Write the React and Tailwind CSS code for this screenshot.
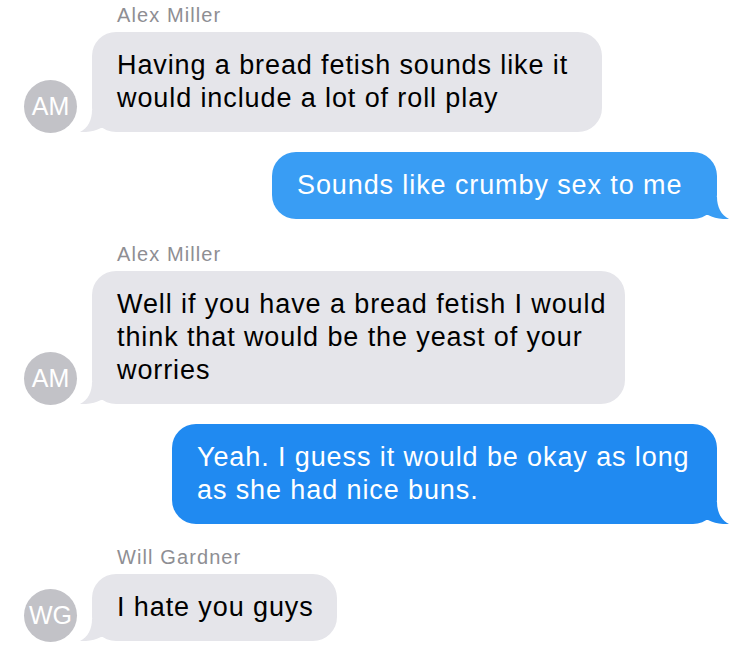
import React from "react";

const FONT = { fontFamily: '"Liberation Sans", Arial, sans-serif' };

function TailLeft({ color }) {
  return (
    <svg
      className="absolute bottom-0 left-[-12px] h-[22px] w-[40px]"
      viewBox="0 0 40 22"
    >
      <path
        d="M12 0 C12 10 8 18 0 22 C8 22.5 15 21 21 18 L34 18 L34 0 Z"
        fill={color}
      />
    </svg>
  );
}

function TailRight({ color }) {
  return (
    <svg
      className="absolute bottom-0 right-[-12px] h-[22px] w-[40px]"
      viewBox="0 0 40 22"
    >
      <path
        d="M28 0 C28 10 32 18 40 22 C32 22.5 25 21 19 18 L6 18 L6 0 Z"
        fill={color}
      />
    </svg>
  );
}

function Name({ children, className = "" }) {
  return (
    <div
      className={`ml-[117px] h-[24px] mb-[5px] text-[20px] leading-[24px] tracking-[1.1px] text-[#8e8e93] ${className}`}
    >
      {children}
    </div>
  );
}

function Avatar({ initials }) {
  return (
    <div className="ml-[24px] mb-[-1px] flex h-[53px] w-[53px] shrink-0 items-center justify-center rounded-full bg-[#c2c2c7] text-[25px] leading-none text-white">
      {initials}
    </div>
  );
}

function Received({ initials, width, lines }) {
  return (
    <div className="flex items-end">
      <Avatar initials={initials} />
      <div
        className={`relative ml-[15px] rounded-[24px] bg-[#e5e5ea] py-[17px] pl-[25px] text-[27px] leading-[33px] tracking-[0.9px] text-black whitespace-nowrap ${width}`}
      >
        <TailLeft color="#e5e5ea" />
        <div className="relative">
          {lines.map((l, i) => (
            <div key={i}>{l}</div>
          ))}
        </div>
      </div>
    </div>
  );
}

function Sent({ width, lines, bg, color }) {
  return (
    <div className="flex justify-end pr-[33px]">
      <div
        className={`relative rounded-[24px] py-[17px] pl-[25px] text-[27px] leading-[33px] tracking-[0.9px] text-white whitespace-nowrap ${bg} ${width}`}
      >
        <TailRight color={color} />
        <div className="relative">
          {lines.map((l, i) => (
            <div key={i}>{l}</div>
          ))}
        </div>
      </div>
    </div>
  );
}

export default function App() {
  return (
    <div
      className="h-[651px] w-[750px] overflow-hidden bg-white pt-[3px]"
      style={FONT}
    >
      <Name>Alex Miller</Name>
      <Received
        initials="AM"
        width="w-[510px]"
        lines={[
          "Having a bread fetish sounds like it",
          "would include a lot of roll play",
        ]}
      />
      <div className="mt-[20px]">
        <Sent
          width="w-[445px]"
          bg="bg-[#399df4]"
          color="#399df4"
          lines={["Sounds like crumby sex to me"]}
        />
      </div>
      <Name className="mt-[23px]">Alex Miller</Name>
      <Received
        initials="AM"
        width="w-[533px]"
        lines={[
          "Well if you have a bread fetish I would",
          "think that would be the yeast of your",
          "worries",
        ]}
      />
      <div className="mt-[20px]">
        <Sent
          width="w-[545px]"
          bg="bg-[#208af1]"
          color="#208af1"
          lines={[
            "Yeah. I guess it would be okay as long",
            "as she had nice buns.",
          ]}
        />
      </div>
      <Name className="mt-[21px]">Will Gardner</Name>
      <Received
        initials="WG"
        width="w-[245px]"
        lines={["I hate you guys"]}
      />
    </div>
  );
}
